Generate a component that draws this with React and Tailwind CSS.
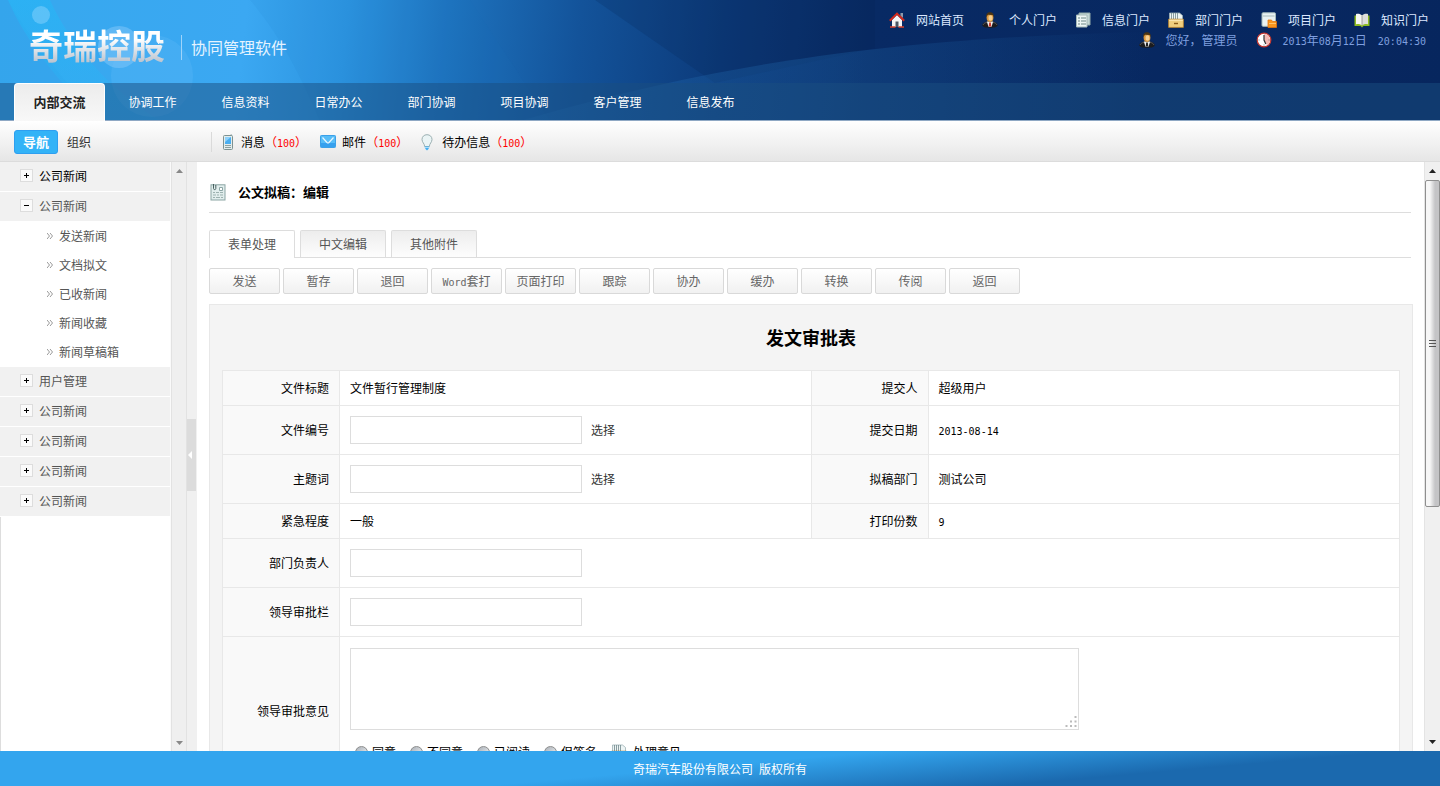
import React, { useState } from 'react';
import clsx from 'clsx';

const UserIcon = ({ tie = '#222' }) => (
  <svg width="16" height="16" viewBox="0 0 16 16" className="shrink-0">
    <path d="M.3 13.300C.3 11 3 10 5.500 9.300h5c2.500.7 5.200 1.700 5.200 4 0 1.700-3.500 2.500-7.700 2.500S.3 15 .3 13.300z" fill="#1c1c1e" />
    <path d="M1.200 12.800c.3-1.300 2-2 3.800-2.600M14.800 12.800c-.3-1.300-2-2-3.800-2.600" fill="none" stroke="#5d5d61" />
    <path d="M4.800 9.600h6.400L9.500 14.800h-3z" fill="#f2f2f2" />
    <path d="M7.200 10.500h1.600l.5 4H6.700z" fill={tie} />
    <ellipse cx="8" cy="5.500" rx="3.400" ry="4.400" fill="#d9973e" />
    <ellipse cx="8.500" cy="6" rx="2" ry="2.800" fill="#f6cf90" />
    <path d="M4.300 5C3.800 2 5.500 .2 8 .2s4.200 1.800 3.700 4.800L10.500 3 6 2.800z" fill="#4a3414" />
  </svg>
);

const HomeIcon = () => (
  <svg width="16" height="16" viewBox="0 0 16 16" className="shrink-0">
    <path d="M11.500 1h2.500v5l-2.500-2z" fill="#8f9aab" />
    <path d="M3 8l5-5 5 5v7H3z" fill="#f4f4f4" />
    <path d="M6.500 9.500h3V15h-3z" fill="#4b5563" />
    <path d="M.8 8.800L8 1.600l7.200 7.200" fill="none" stroke="#d42a1c" strokeWidth="2" />
    <path d="M1 15h5.500M9.500 15H15" stroke="#d8412c" strokeWidth="1.500" />
  </svg>
);

const DocsIcon = () => (
  <svg width="16" height="16" viewBox="0 0 16 16" className="shrink-0">
    <path d="M4 1h11v12H4z" fill="#c3d6d4" stroke="#93abaa" />
    <path d="M1.500 3h10.500v12H1.500z" fill="#eef6f4" stroke="#a5bab8" />
    <path d="M3 6h2M3 9h2M3 12h2M6 6h5M6 9h5M6 12h5" stroke="#6d8785" strokeWidth="1.200" />
  </svg>
);

const DrawerIcon = () => (
  <svg width="16" height="16" viewBox="0 0 16 16" className="shrink-0">
    <path d="M1.500 8V1h10L14.500 3.500V8z" fill="#eef5f5" stroke="#9db1b5" strokeWidth=".8" />
    <path d="M3.500 1v6M5.500 1v6M7.500 1v6M9.500 1v6" stroke="#6f868c" strokeWidth=".8" />
    <path d="M.6 7.200h14.800v8.200H.6z" fill="#f1cf7f" stroke="#b9822d" strokeWidth=".8" />
    <path d="M1.200 8.200h13.600" stroke="#fff0c4" />
    <path d="M6 11.500h4" stroke="#8a5c18" strokeWidth="1.400" />
  </svg>
);

const ProjectIcon = () => (
  <svg width="16" height="16" viewBox="0 0 16 16" className="shrink-0">
    <rect x="1" y=".8" width="13.500" height="13.500" rx="1" fill="#e9f2f2" stroke="#a4b9b9" />
    <path d="M2 4h11.500" stroke="#a9bcbc" />
    <path d="M7 8h3.500l1 1.500H15.500V15.500H7z" fill="#f9961e" stroke="#e2730c" strokeWidth=".8" />
    <path d="M8 11.500h7" stroke="#ffc468" />
  </svg>
);

const BookIcon = () => (
  <svg width="16" height="16" viewBox="0 0 16 16" className="shrink-0">
    <path d="M.5 3.500h15V14H9.500L8 15.500 6.500 14h-6z" fill="#8dbb22" />
    <path d="M2 2c2.500-.6 4.500 0 6 1.500V13.500C6.500 12.200 4.500 11.700 2 12.300z" fill="#f7f7f2" />
    <path d="M14 2c-2.500-.6-4.500 0-6 1.500V13.500c1.500-1.300 3.500-1.800 6-1.200z" fill="#dededa" />
    <path d="M8 3.500v10" stroke="#8d8d86" strokeWidth=".8" />
  </svg>
);

const ClockIcon = () => (
  <svg width="16" height="16" viewBox="0 0 16 16" className="shrink-0">
    <circle cx="8" cy="8" r="6.800" fill="#fff" stroke="#c5372f" strokeWidth="1.200" />
    <path d="M8 1.800a6.200 6.200 0 0 1 3 11.500L8 8z" fill="#f4b9b4" />
    <path d="M8 3v5l1.800 4" fill="none" stroke="#333" strokeWidth="1.200" />
    <path d="M2.500 8h1M12.500 8h1M8 13.500v-1" stroke="#777" />
  </svg>
);

const PhoneIcon = () => (
  <svg width="12" height="16" viewBox="0 0 12 16" className="shrink-0">
    <path d="M8.500 .5h1.500v2H8.500z" fill="#8ca0a0" />
    <rect x="1.500" y="1.500" width="9" height="14" rx="1" fill="#e3ecec" stroke="#7d9292" />
    <path d="M3 3h6v7H3z" fill="#4aaef0" />
    <path d="M3 3h6L3 8z" fill="#8fd2fb" />
    <path d="M3 11.500h6M3 13.500h6" stroke="#8ba0a0" />
  </svg>
);

const MailIcon = () => (
  <svg width="16" height="13" viewBox="0 0 16 13" className="shrink-0">
    <rect x=".5" y=".5" width="15" height="12" rx=".8" fill="#57bdf8" stroke="#3ba0e8" />
    <path d="M1 8h14v4H1z" fill="#36a0ee" />
    <path d="M2.500 2.500L7 7.500c.6.600 1.400.600 2 0l4.500-5" fill="none" stroke="#e8f6ff" strokeWidth="1.200" />
  </svg>
);

const BulbIcon = () => (
  <svg width="12" height="17" viewBox="0 0 12 17" className="shrink-0">
    <path d="M6 .7c-3 0-5 2-5 4.800C1 8.300 3.500 9.500 3.700 12.500h4.600C8.500 9.500 11 8.300 11 5.500 11 2.700 9 .7 6 .7z" fill="#eaf4f5" stroke="#9bb0b2" />
    <path d="M3.500 12.500h5l-1 2.500L6 16.500 4.500 15z" fill="#41aff3" />
    <path d="M4 13.500h4" stroke="#a6dcfb" />
  </svg>
);

const FormIcon = () => (
  <svg width="16" height="17" viewBox="0 0 16 17" className="shrink-0">
    <rect x="1" y=".8" width="14" height="15.200" fill="#e2eeed" stroke="#8ba5a4" />
    <path d="M3.500 0v4.500c0 1.500 2.300 1.500 2.300 0V1" fill="none" stroke="#48605f" />
    <path d="M9.500 3.500h3v3h-3z" fill="#fff" stroke="#8ba5a4" />
    <path d="M3 8.500h2M6 8.500h3M10 8.500h3M3 11h3M7 11h2M10 11h3M3 13.500h2M6 13.500h4M11 13.500h2" stroke="#9db2b0" />
  </svg>
);

const Arrow = ({ down, color }) => (
  <svg width="7" height="4" viewBox="0 0 7 4">
    <path d={down ? 'M0 0h7L3.500 4z' : 'M0 4h7L3.500 0z'} fill={color} />
  </svg>
);

const HeaderArt = () => (
  <svg className="absolute inset-0 h-full w-full" viewBox="0 0 1440 121" preserveAspectRatio="none" aria-hidden="true">
    <defs>
      <linearGradient id="sky" x1="0" y1="0" x2="1440" y2="150" gradientUnits="userSpaceOnUse">
        <stop offset="0" stopColor="#36a8ee" />
        <stop offset=".17" stopColor="#3ba8f2" />
        <stop offset=".24" stopColor="#2c94e0" />
        <stop offset=".31" stopColor="#1e73be" />
        <stop offset=".4" stopColor="#13539a" />
        <stop offset=".5" stopColor="#0c3a7a" />
        <stop offset=".6" stopColor="#082a64" />
        <stop offset="1" stopColor="#07265e" />
      </linearGradient>
      <linearGradient id="streak" x1="0" y1="0" x2="0" y2="121" gradientUnits="userSpaceOnUse">
        <stop offset="0" stopColor="#22baf8" stopOpacity=".5" />
        <stop offset="1" stopColor="#22baf8" stopOpacity=".15" />
      </linearGradient>
      <linearGradient id="swoosh" x1="520" y1="0" x2="1150" y2="0" gradientUnits="userSpaceOnUse">
        <stop offset="0" stopColor="#2a7cc4" stopOpacity=".2" />
        <stop offset=".5" stopColor="#1a5a9c" stopOpacity=".4" />
        <stop offset="1" stopColor="#1a5a9c" stopOpacity="0" />
      </linearGradient>
    </defs>
    <rect width="1440" height="121" fill="url(#sky)" />
    <path d="M0 0h8C30 40 60 75 100 121H0z" fill="#2a95dc" opacity=".12" />
    <path d="M8 0h42c20 45 60 90 110 121h-60C60 85 25 40 8 0z" fill="url(#streak)" />
    <path d="M250 0c30 35 50 75 70 121h230L470 0z" fill="#1670c0" opacity=".08" />
    <path d="M595 0l120 83 160-35V0z" fill="#04204f" opacity=".18" />
    <path d="M520 121C680 75 850 38 1150 32v89z" fill="url(#swoosh)" />
    <circle cx="41" cy="15" r="9" fill="#9fdcff" opacity=".4" />
    <circle cx="119" cy="47" r="21" fill="#a5d8ff" opacity=".35" />
    <circle cx="152" cy="76" r="41" fill="#7cc6ff" opacity=".18" />
  </svg>
);

// digits and latin letters, half the width of a CJK glyph
const Mono = ({ children, className }) => (
  <span className={clsx('font-["DejaVu_Sans_Mono",monospace] text-[10px]', className)}>{children}</span>
);

const portals = [
  { label: '网站首页', icon: <HomeIcon /> },
  { label: '个人门户', icon: <UserIcon tie="#c8372d" /> },
  { label: '信息门户', icon: <DocsIcon /> },
  { label: '部门门户', icon: <DrawerIcon /> },
  { label: '项目门户', icon: <ProjectIcon /> },
  { label: '知识门户', icon: <BookIcon /> },
];

const navItems = ['内部交流', '协调工作', '信息资料', '日常办公', '部门协调', '项目协调', '客户管理', '信息发布'];

const notices = [
  { label: '消息', icon: <PhoneIcon />, gap: 'gap-[7px]' },
  { label: '邮件', icon: <MailIcon />, gap: 'gap-[6px]' },
  { label: '待办信息', icon: <BulbIcon />, gap: 'gap-[9px]' },
];

const sideMenu = [
  { label: '公司新闻', current: true },
  { label: '公司新闻', children: ['发送新闻', '文档拟文', '已收新闻', '新闻收藏', '新闻草稿箱'] },
  { label: '用户管理' },
  { label: '公司新闻' },
  { label: '公司新闻' },
  { label: '公司新闻' },
  { label: '公司新闻' },
];

const tabs = ['表单处理', '中文编辑', '其他附件'];
const actions = ['发送', '暂存', '退回', 'Word套打', '页面打印', '跟踪', '协办', '缓办', '转换', '传阅', '返回'];
const opinions = ['同意', '不同意', '已阅读', '但签名'];

const Header = () => (
  <header className="relative shrink-0">
    <HeaderArt />
    <div className="relative flex h-[83px] items-start justify-between">
      <div className="flex items-center pt-[21px] pl-[29px]">
        <h1 className="bg-linear-to-b from-white from-35% to-[#b9c3cf] to-80% bg-clip-text pb-1 text-[34px] leading-[48px] font-bold text-transparent">
          奇瑞控股
        </h1>
        <span className="ml-4 h-[25px] w-px bg-[#9fd4fa]" />
        <span className="ml-[9px] text-base text-[#e4f3ff]">协同管理软件</span>
      </div>
      <div className="pt-[10px] text-right">
        <div className="flex gap-[18px] pr-[11px]">
          {portals.map((p) => (
            <a key={p.label} href="#" className="flex h-5 items-center gap-[11px] text-[#dce8ff]">
              {p.icon}
              {p.label}
            </a>
          ))}
        </div>
        <div className="flex h-5 items-center justify-end gap-[18px] pr-[14px] text-[#7f9fdf]">
          <span className="flex items-center gap-[11px]">
            <UserIcon />
            您好，管理员
          </span>
          <span className="flex items-center gap-[11px]">
            <ClockIcon />
            <span>
              <Mono>2013</Mono>年<Mono>08</Mono>月<Mono>12</Mono>日<Mono className="ml-[11px]">20:04:30</Mono>
            </span>
          </span>
        </div>
      </div>
    </div>
    <nav className="relative flex h-[38px] gap-[2px] border-b border-[#8fa8c4] bg-[#1a4d80]/50 pl-[14px]">
      {navItems.map((item, i) => (
        <a
          key={item}
          href="#"
          className={clsx(
            'flex w-[91px] items-center justify-center',
            i === 0
              ? '-mb-px rounded-t-sm border border-b-0 border-white bg-linear-to-b from-[#ececec] to-[#f8f8f8] pb-[2px] text-[13px] font-bold text-[#222]'
              : 'text-white'
          )}
        >
          {item}
        </a>
      ))}
    </nav>
  </header>
);

const Toolbar = () => (
  <div className="flex h-[41px] shrink-0 items-center border-b border-[#dcdcdc] bg-linear-to-b from-white to-[#e6e6e6] pt-[2px]">
    <div className="flex w-[211px] items-center gap-[9px] pl-[14px]">
      <button className="h-6 w-11 rounded-[3px] border border-[#2e9ff0] bg-[#33b3f7] text-[13px] leading-[22px] font-bold text-white">
        导航
      </button>
      <button className="text-[#333]">组织</button>
    </div>
    <div className="flex h-5 items-center gap-[13px] border-l border-[#dadada] pl-[10px]">
      {notices.map((n) => (
        <a key={n.label} href="#" className={clsx('flex items-center', n.gap)}>
          {n.icon}
          <span>
            {n.label}
            <span className="text-[#f00]">
              （<Mono>100</Mono>）
            </span>
          </span>
        </a>
      ))}
    </div>
  </div>
);

const Sidebar = () => (
  <aside className="flex shrink-0">
    <div className="flex w-[171px] flex-col border-r border-[#fafafa] bg-white text-[#555]">
      <ul>
        {sideMenu.map((item, i) => (
          <li key={i}>
            <a
              href="#"
              className={clsx(
                'flex h-[30px] items-center gap-[6px] border-b border-white bg-[#f1f1f1] pb-[2px] pl-5',
                item.current && 'text-black'
              )}
            >
              <span className="flex h-[13px] w-[13px] items-center justify-center border border-[#ddd] bg-[#fafafa]">
                <svg width="5" height="5" viewBox="0 0 5 5">
                  <path d={item.children ? 'M0 2.500h5' : 'M0 2.500h5M2.500 0v5'} stroke="#000" />
                </svg>
              </span>
              {item.label}
            </a>
            {item.children && (
              <ul>
                {item.children.map((child) => (
                  <li key={child}>
                    <a href="#" className="flex h-[29px] items-center gap-[6px] pb-[2px] pl-[47px]">
                      <svg width="6" height="6" viewBox="0 0 6 6" fill="none" stroke="#999">
                        <path d="M0 0l2.500 3L0 6M3 0l2.500 3L3 6" />
                      </svg>
                      {child}
                    </a>
                  </li>
                ))}
              </ul>
            )}
          </li>
        ))}
      </ul>
      <div className="grow border-l border-[#ddd]" />
    </div>
    <div className="flex w-4 flex-col items-center justify-between border-x border-[#e2e2e2] bg-[#efefef] pt-[7px] pb-[6px]">
      <Arrow color="#888" />
      <Arrow down color="#888" />
    </div>
    <div className="flex w-[10px] items-center bg-[#f0f0f0] pb-1">
      <button aria-label="收起" className="flex h-[72px] w-[9px] items-center justify-start bg-[#dcdcdc] pl-px">
        <svg width="4" height="8" viewBox="0 0 4 8">
          <path d="M4 0v8L0 4z" fill="#fff" />
        </svg>
      </button>
    </div>
  </aside>
);

const th = 'border border-[#e8e8e8] bg-[#f9f9f9] px-[10px] text-right font-normal';
const td = 'border border-[#e8e8e8] bg-white px-[10px] text-left';
const field = 'h-7 w-[232px] border border-[#ddd] bg-white px-1 align-middle';

const ApprovalForm = () => (
  <form className="border border-[#e8e8e8] bg-[#f4f4f4] px-3 pb-4">
    <h2 className="pt-[3px] pb-1 text-center text-lg leading-[58px] font-bold">发文审批表</h2>
    <table className="w-full table-fixed border-collapse">
      <colgroup>
        <col className="w-[117px]" />
        <col />
        <col className="w-[117px]" />
        <col />
      </colgroup>
      <tbody>
        <tr className="h-[35px]">
          <th className={th}>文件标题</th>
          <td className={td}>文件暂行管理制度</td>
          <th className={th}>提交人</th>
          <td className={td}>超级用户</td>
        </tr>
        <tr className="h-[49px]">
          <th className={th}><label htmlFor="docNo">文件编号</label></th>
          <td className={td}>
            <input id="docNo" type="text" className={field} />
            <a href="#" className="ml-[9px] align-middle text-[#333]">选择</a>
          </td>
          <th className={th}>提交日期</th>
          <td className={td}><Mono>2013-08-14</Mono></td>
        </tr>
        <tr className="h-[49px]">
          <th className={th}><label htmlFor="keywords">主题词</label></th>
          <td className={td}>
            <input id="keywords" type="text" className={field} />
            <a href="#" className="ml-[9px] align-middle text-[#333]">选择</a>
          </td>
          <th className={th}>拟稿部门</th>
          <td className={td}>测试公司</td>
        </tr>
        <tr className="h-[35px]">
          <th className={th}>紧急程度</th>
          <td className={td}>一般</td>
          <th className={th}>打印份数</th>
          <td className={td}><Mono>9</Mono></td>
        </tr>
        <tr className="h-[49px]">
          <th className={th}><label htmlFor="manager">部门负责人</label></th>
          <td className={td} colSpan={3}><input id="manager" type="text" className={field} /></td>
        </tr>
        <tr className="h-[49px]">
          <th className={th}><label htmlFor="leader">领导审批栏</label></th>
          <td className={td} colSpan={3}><input id="leader" type="text" className={field} /></td>
        </tr>
        <tr className="h-[149px]">
          <th className={th}><label htmlFor="opinion">领导审批意见</label></th>
          <td className={clsx(td, 'pt-[11px] align-top')} colSpan={3}>
            <div className="relative w-[729px] max-w-full">
              <textarea id="opinion" className="block h-[82px] w-full resize-none border border-[#ddd] p-1" />
              <svg className="absolute right-[2px] bottom-[2px]" width="12" height="12" viewBox="0 0 12 12" fill="#bbb">
                <path d="M9.500 0h2v2h-2zM5 4.500h2v2H5zM9.500 4.500h2v2h-2zM.5 9h2v2h-2zM5 9h2v2H5zM9.500 9h2v2h-2z" />
              </svg>
            </div>
            <div className="mt-[10px] flex h-6 items-center gap-[14px] pl-[5px]">
              {opinions.map((o) => (
                <label key={o} className="flex items-center gap-1">
                  <input
                    type="radio"
                    name="opinionType"
                    className="h-[13px] w-[13px] appearance-none rounded-full border border-[#8e8f8f] bg-linear-to-br from-[#a9b0b8] to-[#f6f6f6] checked:bg-[#2e9ff0]"
                  />
                  {o}
                </label>
              ))}
              <a href="#" className="flex items-center gap-[6px]">
                <DrawerIcon />
                处理意见
              </a>
            </div>
          </td>
        </tr>
      </tbody>
    </table>
  </form>
);

const Content = () => {
  const [tab, setTab] = useState(0);

  return (
    <main className="min-w-0 grow overflow-x-hidden overflow-y-auto bg-white pr-[11px] pl-3 [scrollbar-width:none]">
      <div className="mr-[2px] flex h-[51px] items-center gap-3 border-b border-[#ddd] pt-[10px] pl-px">
        <FormIcon />
        <h2 className="text-[13px] font-bold">公文拟稿：编辑</h2>
      </div>
      <div className="mt-[17px] mr-[2px] flex h-7 gap-[5px] border-b border-[#ddd]">
        {tabs.map((t, i) => (
          <button
            key={t}
            onClick={() => setTab(i)}
            className={clsx(
              'w-[86px] rounded-t-xs border border-b-0 border-[#ddd] text-[#555]',
              tab === i ? '-mb-px bg-white pb-[2px]' : 'bg-linear-to-b from-[#ededed] to-[#fdfdfd]'
            )}
          >
            {t}
          </button>
        ))}
      </div>
      <div className="mt-[10px] mb-[10px] flex gap-[3px]">
        {actions.map((a) => (
          <button
            key={a}
            className="h-[26px] w-[71px] rounded-xs border border-[#d9d9d9] bg-linear-to-b from-white to-[#f1f1f1] leading-6 text-[#666]"
          >
            {a.startsWith('Word') ? <><Mono>Word</Mono>{a.slice(4)}</> : a}
          </button>
        ))}
      </div>
      <ApprovalForm />
    </main>
  );
};

const PageScroll = () => (
  <div className="flex w-4 shrink-0 flex-col items-center border-l border-[#e4e4e4] bg-[#f0f0f0]">
    <div className="flex h-[18px] shrink-0 items-center"><Arrow color="#222" /></div>
    <div className="flex h-[327px] w-full items-center justify-center rounded-xs border border-[#8f8f8f] bg-linear-to-r from-[#f7f7f7] from-30% to-[#c4c4c6] to-70%">
      <svg width="7" height="8" viewBox="0 0 7 8" stroke="#555">
        <path d="M0 .5h7M0 3.500h7M0 6.500h7" />
      </svg>
    </div>
    <div className="mt-auto flex h-[18px] shrink-0 items-center"><Arrow down color="#222" /></div>
  </div>
);

const App = () => (
  <div className="flex h-screen flex-col overflow-hidden bg-white font-['Noto_Sans_CJK_SC',sans-serif] text-xs text-black">
    <Header />
    <Toolbar />
    <div className="flex min-h-0 grow">
      <Sidebar />
      <Content />
      <PageScroll />
    </div>
    <footer className="flex h-[35px] shrink-0 items-center justify-center gap-[6px] bg-[linear-gradient(175deg,#33a5ee_48%,#1b69ae_76%)] text-white">
      <span>奇瑞汽车股份有限公司</span>
      <span>版权所有</span>
    </footer>
  </div>
);

export default App;
